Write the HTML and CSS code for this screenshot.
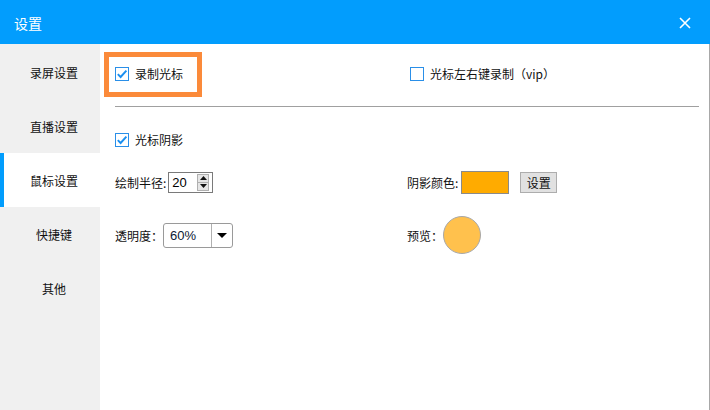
FILE: index.html
```html
<!DOCTYPE html>
<html>
<head>
<meta charset="utf-8">
<link rel="stylesheet" href="styles.css">
</head>
<body>
<div class="app">
  <header class="titlebar">
    <span class="title">设置</span>
    <svg class="close" width="12" height="12" viewBox="0 0 12 12"><path d="M1 1L11 11M11 1L1 11" stroke="#fff" stroke-width="1.6" fill="none"/></svg>
  </header>
  <div class="body">
    <nav class="sidebar">
      <div class="nav-item">录屏设置</div>
      <div class="nav-item">直播设置</div>
      <div class="nav-item active">鼠标设置</div>
      <div class="nav-item">快捷键</div>
      <div class="nav-item">其他</div>
    </nav>
    <main class="content">
      <div class="row row-top">
        <label class="check highlighted">
          <span class="box checked"><svg width="12" height="12" viewBox="0 0 12 12"><path d="M1.8 6.2L4.6 9L10.4 2.6" stroke="#1a8ff0" stroke-width="1.9" fill="none"/></svg></span>
          <span>录制光标</span>
          <span class="highlight"></span>
        </label>
        <label class="check right-check">
          <span class="box"></span>
          <span>光标左右键录制（vip）</span>
        </label>
      </div>
      <div class="separator"></div>
      <div class="grid">
        <label class="check">
          <span class="box checked"><svg width="12" height="12" viewBox="0 0 12 12"><path d="M1.8 6.2L4.6 9L10.4 2.6" stroke="#1a8ff0" stroke-width="1.9" fill="none"/></svg></span>
          <span>光标阴影</span>
        </label>
        <div></div>

        <div class="field">
          <span>绘制半径:</span>
          <div class="spin">
            <span class="spin-val">20</span>
            <span class="spin-btns">
              <span class="spin-btn"><svg width="7" height="4" viewBox="0 0 7 4"><path d="M0 4L3.5 0L7 4Z" fill="#111"/></svg></span>
              <span class="spin-btn"><svg width="7" height="4" viewBox="0 0 7 4"><path d="M0 0L7 0L3.5 4Z" fill="#111"/></svg></span>
            </span>
          </div>
        </div>
        <div class="field">
          <span>阴影颜色:</span>
          <span class="swatch"></span>
          <button class="btn">设置</button>
        </div>

        <div class="field">
          <span>透明度：</span>
          <div class="select">
            <span class="select-val">60%</span>
            <span class="select-arrow"><svg width="10" height="5" viewBox="0 0 10 5"><path d="M0 0L10 0L5 5Z" fill="#000"/></svg></span>
          </div>
        </div>
        <div class="field">
          <span>预览：</span>
          <span class="preview"></span>
        </div>
      </div>
    </main>
  </div>
</div>
</body>
</html>
```

FILE: styles.css
```css
* { box-sizing: border-box; }
html, body { margin: 0; padding: 0; }
body {
  width: 710px;
  height: 410px;
  overflow: hidden;
  font-family: "Noto Sans CJK SC", "Microsoft YaHei", sans-serif;
  font-size: 12px;
  color: #111;
  background: #fff;
}
.app {
  display: flex;
  flex-direction: column;
  height: 410px;
}
.titlebar {
  height: 44px;
  background: #029dfd;
  display: flex;
  align-items: center;
  justify-content: space-between;
  padding: 0 19px 0 14px;
  color: #fff;
}
.title {
  font-size: 14px;
  line-height: 1;
  margin-top: 1px;
}
.close { margin-top: 1px; }
.body {
  flex: 1;
  display: flex;
  border-right: 1px solid #a8a8a8;
}
.sidebar {
  width: 100px;
  background: #f0f0f0;
  padding-top: 1px;
  display: flex;
  flex-direction: column;
}
.nav-item {
  height: 54px;
  display: flex;
  align-items: center;
  justify-content: center;
  padding-left: 8px;
  padding-top: 1px;
  font-size: 12px;
  color: #111;
}
.nav-item.active {
  background: #fff;
  box-shadow: inset 4px 0 0 #029dfd;
}
.content {
  flex: 1;
  padding: 0 10px 0 15px;
}
.row-top {
  height: 60px;
  display: grid;
  grid-template-columns: 292px 1fr;
  align-items: center;
}
.check {
  display: flex;
  align-items: center;
  gap: 6px;
  height: 14px;
  line-height: 14px;
  position: relative;
  justify-self: start;
}
.right-check { margin-left: 3px; }
.box {
  width: 14px;
  height: 14px;
  border: 1px solid #2a8fe8;
  background: #fff;
  display: flex;
  align-items: center;
  justify-content: center;
}
.highlight {
  position: absolute;
  left: -11px;
  top: -15px;
  width: 98px;
  height: 45px;
  border: 5px solid #fb8a3a;
  pointer-events: none;
}
.separator {
  height: 1px;
  background: #a0a0a0;
  margin-top: 2px;
}
.grid {
  display: grid;
  grid-template-columns: 292px 1fr;
  grid-template-rows: 42px 42px 64px;
  margin-top: 12px;
  align-items: center;
}
.field {
  display: flex;
  align-items: center;
}
.spin {
  width: 45px;
  height: 21px;
  border: 1px solid #7a7a7a;
  margin-left: 2px;
  display: flex;
  align-items: center;
  justify-content: space-between;
  padding: 0 3px 0 3px;
}
.spin-val {
  font-family: "Liberation Sans", Arial, sans-serif;
  font-size: 13px;
  color: #000;
}
.spin-btns {
  display: flex;
  flex-direction: column;
  width: 12px;
  height: 17px;
}
.spin-btn {
  flex: 1;
  border: 1px solid #b0b0b0;
  background: #e6e6e6;
  display: flex;
  align-items: center;
  justify-content: center;
}
.spin-btn + .spin-btn { border-top: none; }
.swatch {
  width: 48px;
  height: 23px;
  background: #ffab00;
  border: 1px solid #8a8a8a;
  margin-left: 3px;
}
.btn {
  width: 37px;
  height: 21px;
  margin-left: 11px;
  padding: 0;
  border: 1px solid #adadad;
  background: #e1e1e1;
  font-family: "Noto Sans CJK SC", sans-serif;
  font-size: 12px;
  color: #111;
}
.select {
  width: 70px;
  height: 25px;
  border: 1px solid #9a9a9a;
  border-radius: 3px;
  display: flex;
  align-items: stretch;
}
.select-val {
  flex: 1;
  display: flex;
  align-items: center;
  padding-left: 6px;
  font-family: "Liberation Sans", Arial, sans-serif;
  font-size: 13px;
  color: #0c1a33;
  border-right: 1px solid #b0b0b0;
}
.select-arrow {
  width: 20px;
  display: flex;
  align-items: center;
  justify-content: center;
}
.preview {
  width: 38px;
  height: 38px;
  border-radius: 50%;
  background: #ffc14d;
  border: 1px solid #a8a8a8;
}
```
